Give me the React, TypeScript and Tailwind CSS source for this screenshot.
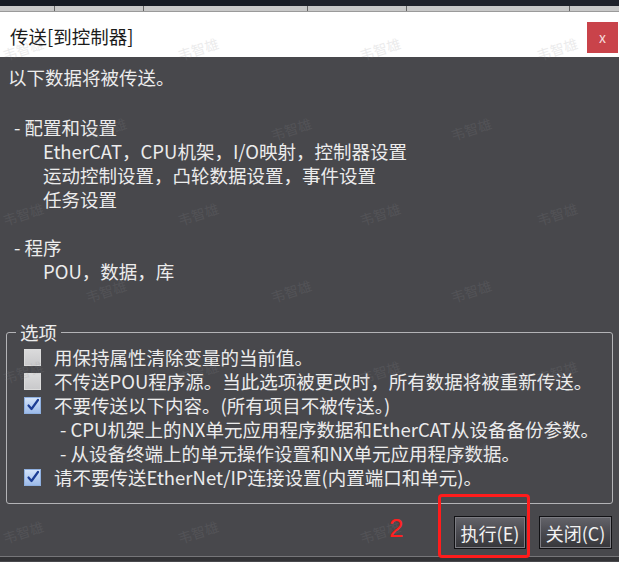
import React from 'react';

const FONT = '"Noto Sans CJK SC", "Noto Sans", sans-serif';

const marks: [number, number][] = [
  [22, 50], [197, 50], [379, 50], [556, 50],
  [105, 130], [290, 130], [470, 130],
  [22, 215], [197, 215], [379, 215], [556, 215],
  [105, 292], [290, 292], [470, 292],
  [22, 373], [197, 373], [379, 373], [556, 373],
  [105, 455], [290, 455], [470, 455],
  [22, 533], [197, 533], [379, 533],
];

const Check: React.FC<{ checked?: boolean }> = ({ checked }) =>
  checked ? (
    <span className="w-[17px] h-[17px] shrink-0 border border-[#8fb0e0] bg-gradient-to-b from-[#d3e3fa] to-[#9dbbe9] flex items-center justify-center">
      <svg width="14" height="14" viewBox="0 0 14 14">
        <path d="M2.5 7.5 L5.5 11 L12 2" fill="none" stroke="#1c3d95" strokeWidth="2.2" strokeLinecap="round" strokeLinejoin="round" />
      </svg>
    </span>
  ) : (
    <span className="w-[17px] h-[17px] shrink-0 border border-[#dcdcdc] bg-gradient-to-b from-[#dadadb] to-[#c9c9cb]" />
  );

const Option: React.FC<{ checked?: boolean; children: React.ReactNode }> = ({ checked, children }) => (
  <div className="flex items-center h-[24px] pl-[17px] gap-[13px]">
    <Check checked={checked} />
    <span className="whitespace-nowrap">{children}</span>
  </div>
);

const Btn: React.FC<{ children: React.ReactNode; w: string }> = ({ children, w }) => (
  <button
    className={`${w} h-[33px] border border-[#111114] bg-gradient-to-b from-[#64646a] via-[#4a4a50] to-[#36363a] shadow-[inset_0_0_0_1px_#7c7c82] text-[#f2f2f2] text-[18px] leading-none whitespace-nowrap`}
  >
    {children}
  </button>
);

export default function App() {
  return (
    <div className="relative w-[619px] h-[562px] overflow-hidden bg-[#48484c]" style={{ fontFamily: FONT }}>
      {/* app strip behind the dialog */}
      <div className="h-[6px] flex">
        <div className="w-[290px] bg-[#161a23]" />
        <div className="flex-1 bg-[#1f222b]" />
      </div>
      <div className="h-[6px] flex bg-[#c8c8c8] border-b border-[#9a9a9a]">
        <div className="w-[55px] border-r border-[#666]" />
        <div className="w-[89px] border-r border-[#666]" />
        <div className="w-[164px] border-r border-[#666]" />
        <div className="w-[99px] border-r border-[#666]" />
        <div className="w-[163px] border-r border-[#666]" />
      </div>

      {/* title bar */}
      <div className="h-[45px] bg-white flex items-start justify-between pl-[10px]">
        <span className="mt-[12px] text-[18.5px] leading-[24px] text-[#1b1b1b]">传送[到控制器]</span>
        <div className="mt-[10px] mr-[1px] w-[31px] h-[31px] bg-[#c9434a] flex items-center justify-center text-[#f6dada] text-[14px]">
          x
        </div>
      </div>

      {/* body */}
      <div className="h-[499px] flex flex-col text-[18.5px] leading-[24px] text-[#ececec]">
        <div className="pt-[8px] pl-[8px]">以下数据将被传送。</div>

        <div className="mt-[26px] pl-[14px]">- 配置和设置</div>
        <div className="pl-[43px]">
          <div>EtherCAT，CPU机架，I/O映射，控制器设置</div>
          <div>运动控制设置，凸轮数据设置，事件设置</div>
          <div>任务设置</div>
        </div>

        <div className="mt-[24px] pl-[14px]">- 程序</div>
        <div className="pl-[43px]">POU，数据，库</div>

        <fieldset className="mt-[38px] mx-[6px] border border-[#b3b3b6] rounded-[3px] pb-[14px]">
          <legend className="ml-[9px] px-[4px] leading-[22px]">选项</legend>
          <div className="pt-[2px]">
            <Option>用保持属性清除变量的当前值。</Option>
            <Option>不传送POU程序源。当此选项被更改时，所有数据将被重新传送。</Option>
            <Option checked>不要传送以下内容。(所有项目不被传送。)</Option>
            <div className="pl-[53px] whitespace-nowrap">- CPU机架上的NX单元应用程序数据和EtherCAT从设备备份参数。</div>
            <div className="pl-[53px] whitespace-nowrap">- 从设备终端上的单元操作设置和NX单元应用程序数据。</div>
            <Option checked>请不要传送EtherNet/IP连接设置(内置端口和单元)。</Option>
          </div>
        </fieldset>

        <div className="mt-[12px] flex justify-end gap-[13px] pr-[7px]">
          <Btn w="w-[72px]">执行(E)</Btn>
          <Btn w="w-[73px]">关闭(C)</Btn>
        </div>
      </div>

      <div className="h-[1px] bg-[#767679]" />
      <div className="h-[4px] bg-[#333336]" />

      {/* watermarks */}
      {marks.map(([x, y], i) => (
        <span
          key={i}
          className="absolute pointer-events-none text-[14px] leading-none text-[#8a8a8e] opacity-[0.16] -rotate-[18deg]"
          style={{ left: x - 20, top: y - 8 }}
        >
          韦智雄
        </span>
      ))}

      {/* annotation */}
      <div className="absolute left-[438px] top-[494px] w-[92px] h-[64px] border-[3px] border-[#ff1c1c] rounded-[4px] pointer-events-none" />
      <span className="absolute left-[389px] top-[513px] text-[26px] leading-[30px] text-[#ff2020]" style={{ fontFamily: '"Liberation Sans", sans-serif' }}>
        2
      </span>
    </div>
  );
}
